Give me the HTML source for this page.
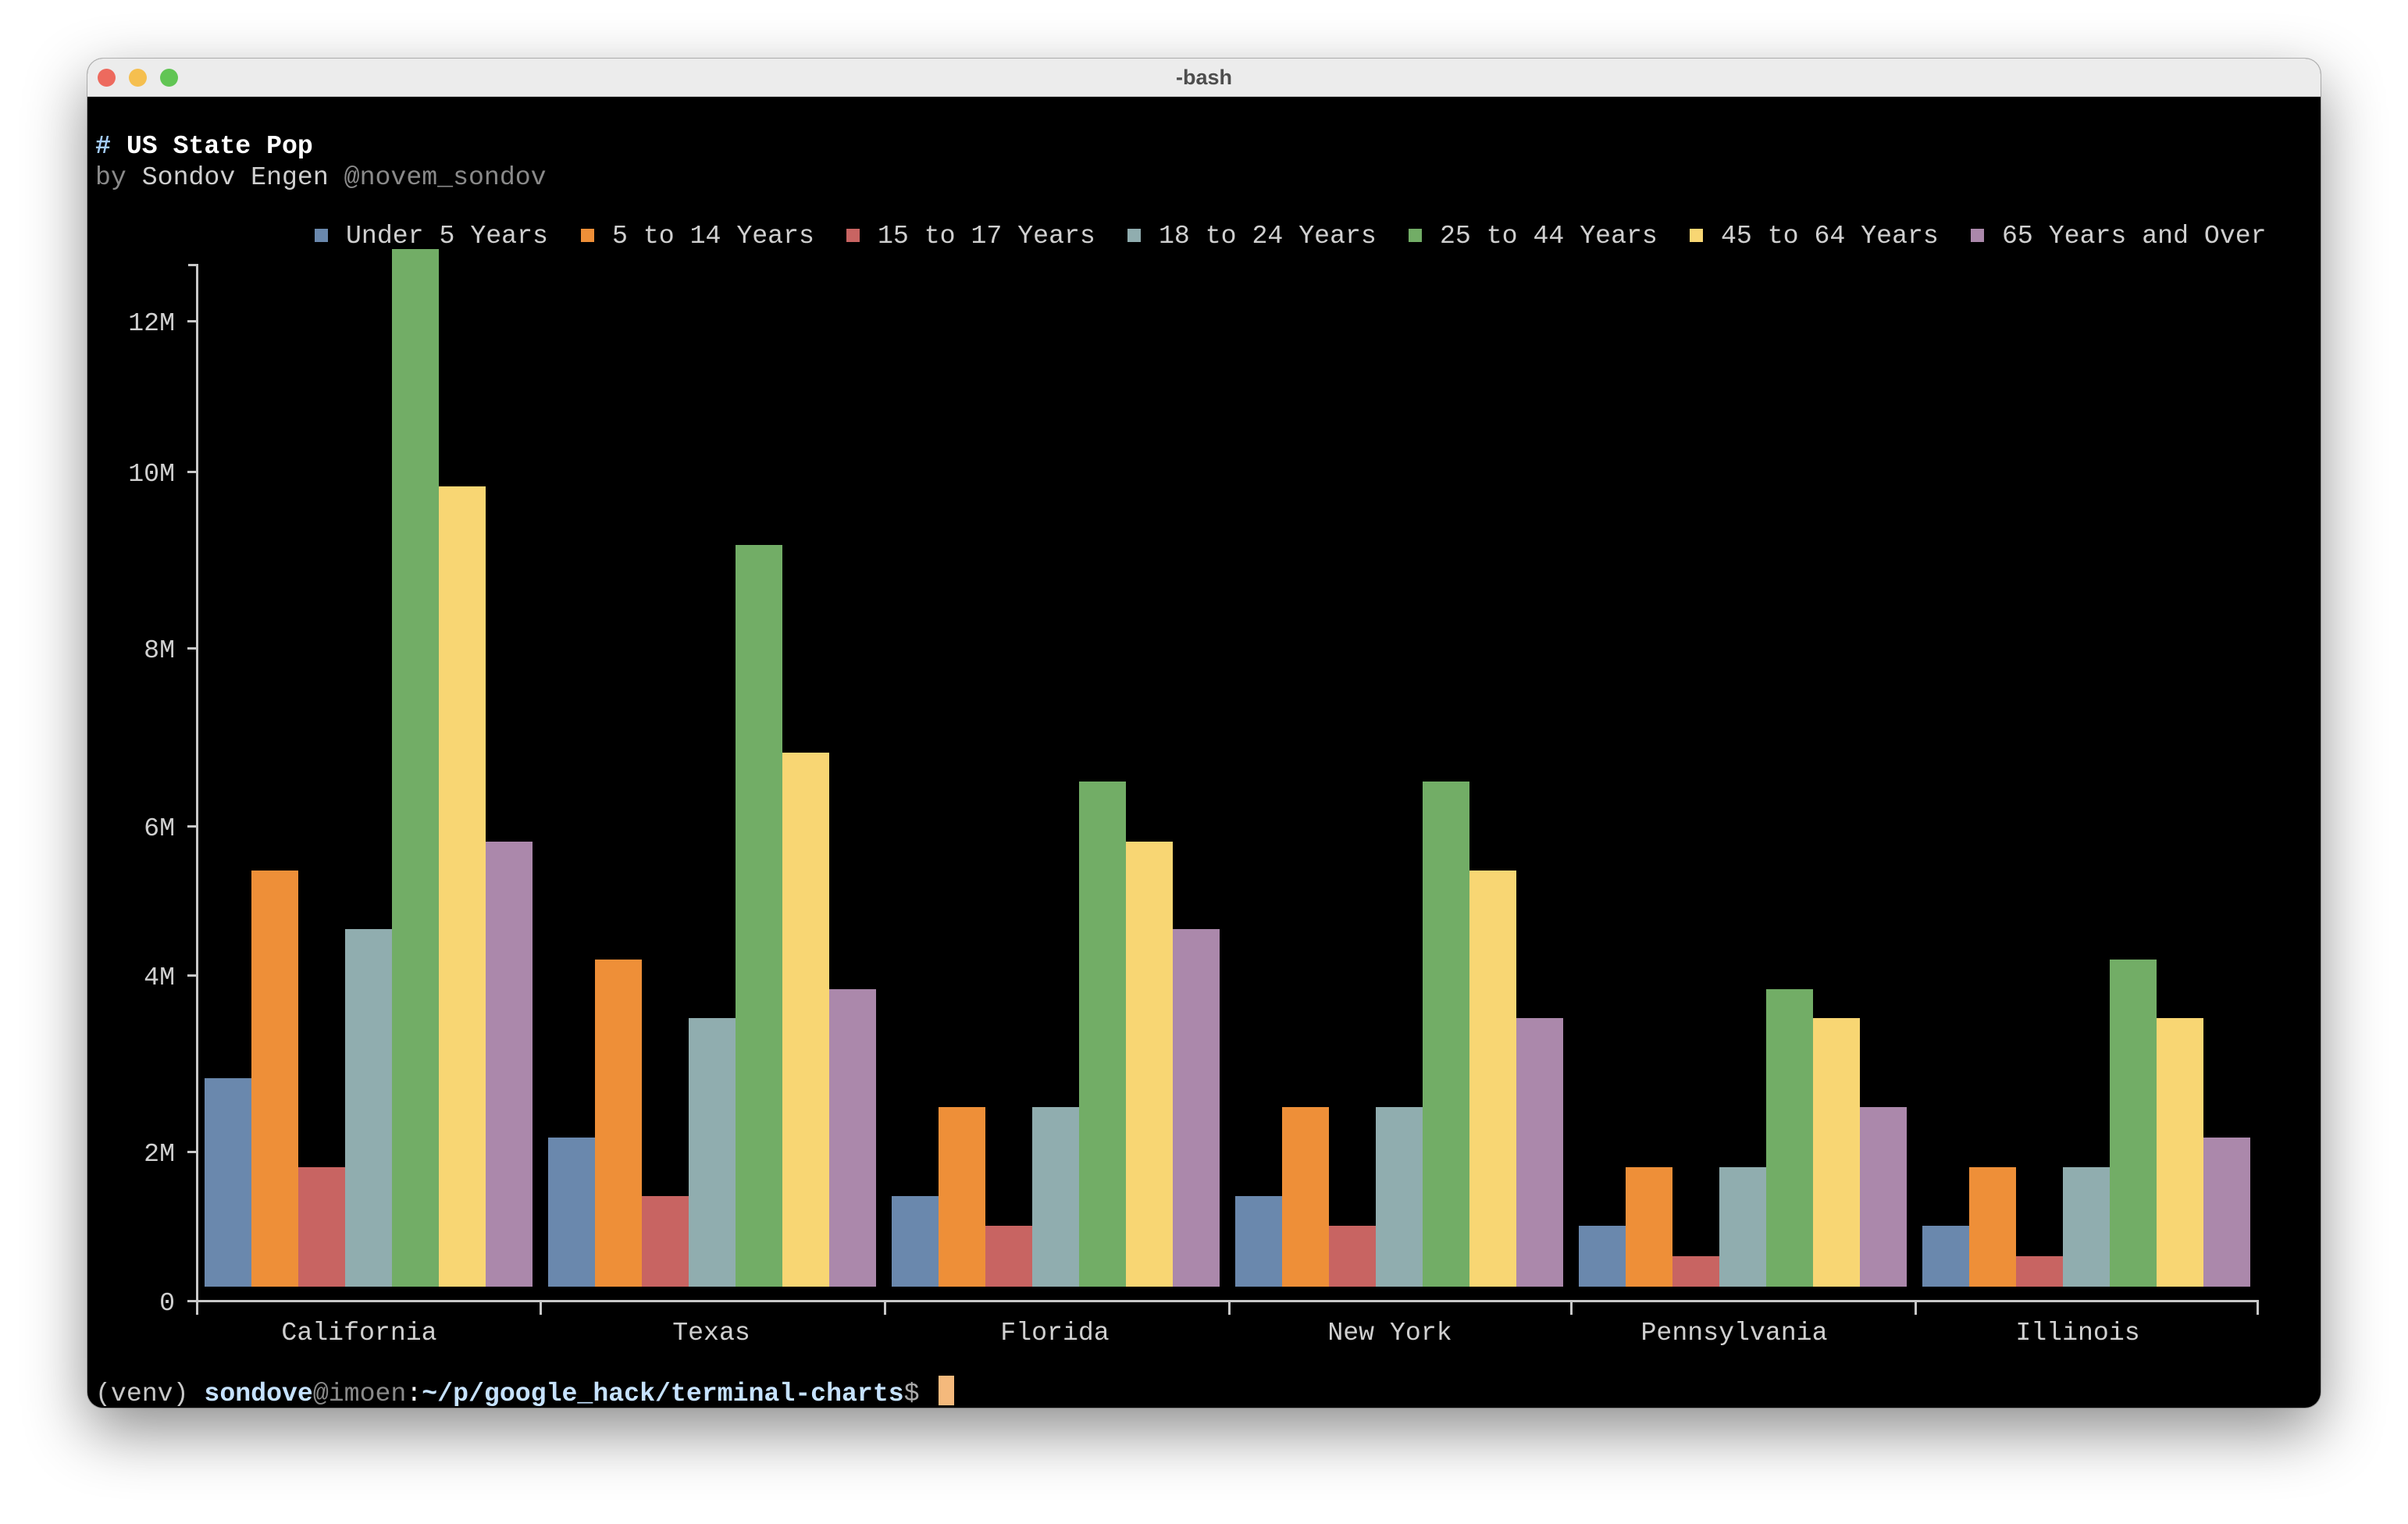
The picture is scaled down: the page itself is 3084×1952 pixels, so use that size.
<!DOCTYPE html>
<html><head><meta charset="utf-8">
<style>
html,body{margin:0;padding:0;width:3084px;height:1952px;background:#fff;overflow:hidden;position:relative;font-family:"Liberation Mono",monospace;}
.win{position:absolute;left:112px;top:75px;width:2860px;height:1728px;border-radius:20px;background:#000;box-shadow:0 30px 80px rgba(0,0,0,0.45),0 0 0 1px rgba(0,0,0,0.25);overflow:hidden;}
.tb{position:absolute;left:0;top:0;width:100%;height:48px;background:#ececec;border-bottom:1px solid #d0d0d0;}
.dot{position:absolute;top:13px;width:23px;height:23px;border-radius:50%;}
.ttl{position:absolute;left:0;right:0;top:9px;text-align:center;font-family:"Liberation Sans",sans-serif;font-weight:bold;font-size:27px;color:#4d4d4d;}
.t{position:absolute;font-size:33.2px;white-space:pre;line-height:40px;color:#d0d0d0;}
.b{font-weight:bold;}
.sq{position:absolute;width:17px;height:17px;}
.bar{position:absolute;width:60px;}
.ax{position:absolute;background:#c8c8c8;}
</style></head><body>
<div class="win">
 <div class="tb">
  <div class="dot" style="left:13px;background:#ed6a5e;"></div>
  <div class="dot" style="left:53px;background:#f5bf4f;"></div>
  <div class="dot" style="left:93px;background:#61c554;"></div>
  <div class="ttl">-bash</div>
 </div>
</div>
<div class="t b" style="left:122px;top:167px;color:#fff;"><span style="color:#a4cdfa">#</span> US State Pop</div>
<div class="t" style="left:122px;top:207px;color:#8a8a8a;">by <span style="color:#cfcfcf">Sondov Engen</span> @novem_sondov</div>
<div id="chart"></div>
<div class="t" style="left:122px;top:1765px;color:#c8c8c8;">(venv) <span class="b" style="color:#c6e2ff">sondove</span><span style="color:#8a8a8a">@imoen</span><span style="color:#fff">:</span><span class="b" style="color:#c6e2ff">~/p/google_hack/terminal-charts</span><span style="color:#aaa">$</span> </div>
<div style="position:absolute;left:1202px;top:1762px;width:20px;height:38px;background:#f4b97c;"></div>
<script>
var cols=["#6a88ad","#ee8f38","#c86462","#90adaf","#72ad66","#f8d673","#ab88ab"];
var names=["Under 5 Years","5 to 14 Years","15 to 17 Years","18 to 24 Years","25 to 44 Years","45 to 64 Years","65 Years and Over"];
var lx=[403,744,1084,1444,1804,2164,2524];
var h="";
for(var i=0;i<7;i++){
 h+='<div class="sq" style="left:'+lx[i]+'px;top:293px;background:'+cols[i]+'"></div>';
 h+='<div class="t" style="left:'+(lx[i]+40)+'px;top:282px;">'+names[i]+'</div>';
}
var tops=[[702,567,760,605,162,317,548],[741,625,779,663,355,490,644],[779,721,798,721,509,548,605],[779,721,798,721,509,567,663],[798,760,818,760,644,663,721],[798,760,818,760,625,663,741]];
var bottom=1648;
for(var g=0;g<6;g++){for(var k=0;k<7;k++){
 var tp=Math.round(tops[g][k]*1.9668);
 h+='<div class="bar" style="left:'+(262+g*440+k*60)+'px;top:'+tp+'px;height:'+(bottom-tp)+'px;background:'+cols[k]+'"></div>';
}}
h+='<div class="ax" style="left:251px;top:338px;width:3px;height:1344px;"></div>';
h+='<div class="ax" style="left:241px;top:338px;width:12px;height:3px;"></div>';
h+='<div class="ax" style="left:251px;top:1665px;width:2641px;height:3px;"></div>';
var xt=[252,692,1133,1574,2012,2453,2891];
for(var i=0;i<7;i++)h+='<div class="ax" style="left:'+(xt[i]-1)+'px;top:1665px;width:3px;height:19px;"></div>';
var yl=[["12M",411],["10M",604],["8M",830],["6M",1058],["4M",1249],["2M",1475],["0",1666]];
for(var i=0;i<yl.length;i++){
 h+='<div class="ax" style="left:240px;top:'+(yl[i][1]-1)+'px;width:12px;height:3px;"></div>';
 h+='<div class="t" style="right:'+(3084-224)+'px;top:'+(yl[i][1]-17)+'px;">'+yl[i][0]+'</div>';
}
var st=[["California",460],["Texas",911],["Florida",1351],["New York",1780],["Pennsylvania",2221],["Illinois",2661]];
for(var i=0;i<6;i++)h+='<div class="t" style="left:'+(st[i][1]-300)+'px;width:600px;text-align:center;top:1687px;">'+st[i][0]+'</div>';
document.getElementById("chart").innerHTML=h;
</script>
</body></html>
